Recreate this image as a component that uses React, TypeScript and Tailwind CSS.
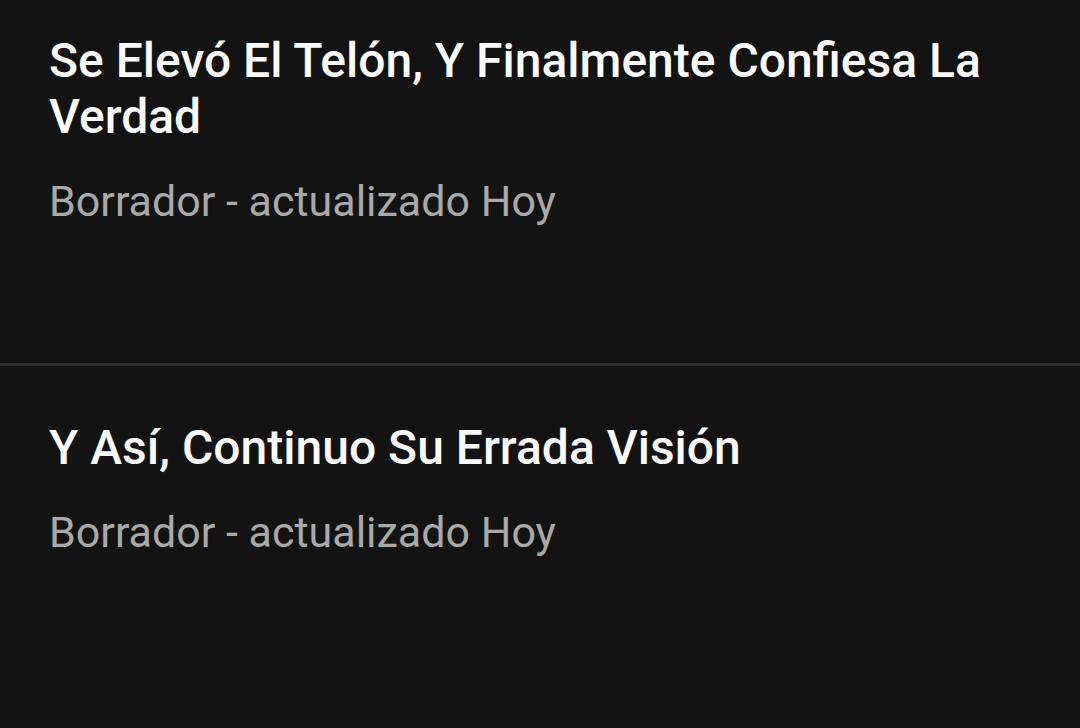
const drafts = [
  { title: "Se Elevó El Telón, Y Finalmente Confiesa La Verdad", status: "Borrador - actualizado Hoy" },
  { title: "Y Así, Continuo Su Errada Visión", status: "Borrador - actualizado Hoy" },
];

function DraftRow({ title, status }: { title: string; status: string }) {
  return (
    <div className="min-h-[387px] border-b-[3px] border-[#2e2e2e] px-[49px] pt-[54px] pb-[136px]">
      <h2 className="text-[48px] leading-[56px] font-medium text-[#fafafa]">{title}</h2>
      <p className="mt-[32px] text-[43px] leading-[48px] text-[#a9a9a9]">{status}</p>
    </div>
  );
}

export default function App() {
  return (
    <div
      className="h-[728px] w-[1080px] overflow-hidden bg-[#131313]"
      style={{ fontFamily: "Roboto, 'Noto Sans', sans-serif" }}
    >
      {/* list is scrolled a little, so the first row's top is cut */}
      <div className="-mt-[21px]">
        {drafts.map((d) => (
          <DraftRow key={d.title} {...d} />
        ))}
      </div>
    </div>
  );
}
